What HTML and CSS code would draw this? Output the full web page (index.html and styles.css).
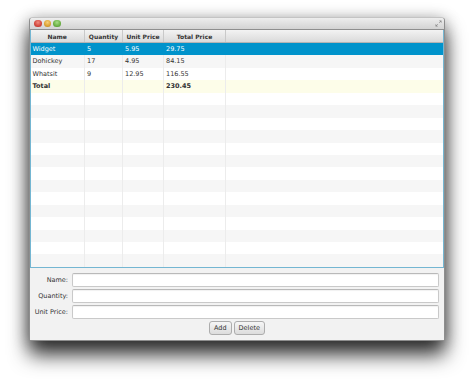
FILE: index.html
```html
<!DOCTYPE html>
<html>
<head>
<meta charset="utf-8">
<link rel="stylesheet" href="styles.css">
</head>
<body>
<div class="window">
  <div class="titlebar">
    <div class="lights">
      <span class="light red"></span>
      <span class="light yellow"></span>
      <span class="light green"></span>
    </div>
    <svg class="resize" width="7" height="7" viewBox="0 0 7 7">
      <path d="M4 0.5 H6.5 V3 Z" fill="#8a8a8a"/>
      <path d="M5.8 1.2 L4.3 2.7" stroke="#8a8a8a" stroke-width="0.9"/>
      <path d="M0.5 4 V6.5 H3 Z" fill="#8a8a8a"/>
      <path d="M1.2 5.8 L2.7 4.3" stroke="#8a8a8a" stroke-width="0.9"/>
    </svg>
  </div>
  <div class="table">
    <div class="row head">
      <div class="cell c1">Name</div>
      <div class="cell c2">Quantity</div>
      <div class="cell c3">Unit Price</div>
      <div class="cell c4">Total Price</div>
      <div class="cell c5"></div>
    </div>
    <div class="row selected">
      <div class="cell c1">Widget</div>
      <div class="cell c2">5</div>
      <div class="cell c3">5.95</div>
      <div class="cell c4">29.75</div>
      <div class="cell c5"></div>
    </div>
    <div class="row odd">
      <div class="cell c1">Dohickey</div>
      <div class="cell c2">17</div>
      <div class="cell c3">4.95</div>
      <div class="cell c4">84.15</div>
      <div class="cell c5"></div>
    </div>
    <div class="row">
      <div class="cell c1">Whatsit</div>
      <div class="cell c2">9</div>
      <div class="cell c3">12.95</div>
      <div class="cell c4">116.55</div>
      <div class="cell c5"></div>
    </div>
    <div class="row total">
      <div class="cell c1">Total</div>
      <div class="cell c2"></div>
      <div class="cell c3"></div>
      <div class="cell c4">230.45</div>
      <div class="cell c5"></div>
    </div>
    <div class="row"><div class="cell c1"></div><div class="cell c2"></div><div class="cell c3"></div><div class="cell c4"></div><div class="cell c5"></div></div>
    <div class="row odd"><div class="cell c1"></div><div class="cell c2"></div><div class="cell c3"></div><div class="cell c4"></div><div class="cell c5"></div></div>
    <div class="row"><div class="cell c1"></div><div class="cell c2"></div><div class="cell c3"></div><div class="cell c4"></div><div class="cell c5"></div></div>
    <div class="row odd"><div class="cell c1"></div><div class="cell c2"></div><div class="cell c3"></div><div class="cell c4"></div><div class="cell c5"></div></div>
    <div class="row"><div class="cell c1"></div><div class="cell c2"></div><div class="cell c3"></div><div class="cell c4"></div><div class="cell c5"></div></div>
    <div class="row odd"><div class="cell c1"></div><div class="cell c2"></div><div class="cell c3"></div><div class="cell c4"></div><div class="cell c5"></div></div>
    <div class="row"><div class="cell c1"></div><div class="cell c2"></div><div class="cell c3"></div><div class="cell c4"></div><div class="cell c5"></div></div>
    <div class="row odd"><div class="cell c1"></div><div class="cell c2"></div><div class="cell c3"></div><div class="cell c4"></div><div class="cell c5"></div></div>
    <div class="row"><div class="cell c1"></div><div class="cell c2"></div><div class="cell c3"></div><div class="cell c4"></div><div class="cell c5"></div></div>
    <div class="row odd"><div class="cell c1"></div><div class="cell c2"></div><div class="cell c3"></div><div class="cell c4"></div><div class="cell c5"></div></div>
    <div class="row"><div class="cell c1"></div><div class="cell c2"></div><div class="cell c3"></div><div class="cell c4"></div><div class="cell c5"></div></div>
    <div class="row odd"><div class="cell c1"></div><div class="cell c2"></div><div class="cell c3"></div><div class="cell c4"></div><div class="cell c5"></div></div>
    <div class="row"><div class="cell c1"></div><div class="cell c2"></div><div class="cell c3"></div><div class="cell c4"></div><div class="cell c5"></div></div>
    <div class="row odd"><div class="cell c1"></div><div class="cell c2"></div><div class="cell c3"></div><div class="cell c4"></div><div class="cell c5"></div></div>
  </div>
  <div class="form">
    <div class="fields">
      <label class="label">Name:</label>
      <div class="input"></div>
      <label class="label">Quantity:</label>
      <div class="input"></div>
      <label class="label">Unit Price:</label>
      <div class="input"></div>
    </div>
    <div class="buttons">
      <button class="btn">Add</button>
      <button class="btn">Delete</button>
    </div>
  </div>
</div>
</body>
</html>
```
FILE: styles.css
```css
* { box-sizing: border-box; }
html, body {
  margin: 0;
  padding: 0;
  background: #ffffff;
  font-family: "DejaVu Sans", "Liberation Sans", sans-serif;
  color: #333333;
}
body {
  min-height: 381px;
  padding-top: 17px;
  padding-left: 29px;
  padding-bottom: 40px;
}
.window {
  width: 416px;
  border: 1px solid #8e8e8e;
  border-top-color: #c4c4c4;
  border-radius: 4px 4px 0 0;
  background: #f2f2f2;
  box-shadow: 0 14px 20px rgba(0,0,0,0.78), 0 2px 16px rgba(0,0,0,0.32);
}
.titlebar {
  height: 12px;
  display: flex;
  align-items: center;
  justify-content: space-between;
  padding: 0 2px 0 4px;
  background: linear-gradient(#eeeeee, #d3d3d3);
  border-bottom: 1px solid #8f8f8f;
  border-radius: 3px 3px 0 0;
}
.lights { display: flex; gap: 2px; }
.light {
  width: 7.5px;
  height: 7.5px;
  border-radius: 50%;
  display: block;
}
.red { background: radial-gradient(circle at 50% 35%, #f08b80, #d2463b 60%, #a8342c); }
.yellow { background: radial-gradient(circle at 50% 35%, #f6cf7a, #dca131 60%, #b07b1c); }
.green { background: radial-gradient(circle at 50% 35%, #a6dc86, #6bb043 60%, #4a8a2c); }
.resize { display: block; }
.table {
  border: 1px solid #74b6d2;
  border-top: none;
  background: #ffffff;
}
.row {
  display: flex;
  height: 12.45px;
  font-size: 6.5px;
  line-height: 12.45px;
  background: #ffffff;
}
.row.odd { background: #f6f6f6; }
.row.selected { background: #0093cb; color: #ffffff; }
.row.total { background: #fdfde9; font-weight: bold; }
.cell {
  padding: 0 2px;
  white-space: nowrap;
  overflow: hidden;
  border-right: 1px solid #ececec;
}
.c1 { width: 54px; padding-left: 1.5px; }
.c2 { width: 38px; }
.c3 { width: 41px; }
.c4 { width: 62px; }
.c5 { flex: 1; border-right: none; }
.row.selected .cell { border-right-color: #0093cb; }
.row.head {
  height: 13px;
  line-height: 13px;
  font-size: 6px;
  font-weight: bold;
  background: linear-gradient(#f3f3f3, #dadada);
  border-bottom: 1px solid #b4b4b4;
}
.row.head .cell {
  text-align: center;
  border-right: 1px solid #c9c9c9;
}
.row.head .c5 { border-right: none; }
.form {
  padding: 5px 5px 5px 0;
  background: #f2f2f2;
}
.fields {
  display: grid;
  grid-template-columns: 38px 1fr;
  column-gap: 4px;
  row-gap: 2px;
}
.label {
  font-size: 6.5px;
  line-height: 14px;
  text-align: right;
  color: #333333;
}
.input {
  height: 14px;
  background: #ffffff;
  border: 1px solid #c9c9c9;
  border-top-color: #b9b9b9;
  border-radius: 2px;
  box-shadow: inset 0 1px 1px rgba(0,0,0,0.06);
}
.buttons {
  display: flex;
  justify-content: center;
  gap: 2px;
  margin-top: 2px;
  padding-left: 5px;
}
.btn {
  height: 14px;
  margin: 0;
  padding: 0 4px;
  font-family: "DejaVu Sans", "Liberation Sans", sans-serif;
  font-size: 6.5px;
  line-height: 12px;
  color: #333333;
  background: linear-gradient(#f6f6f6, #dcdcdc);
  border: 1px solid #adadad;
  border-radius: 3px;
}
```
